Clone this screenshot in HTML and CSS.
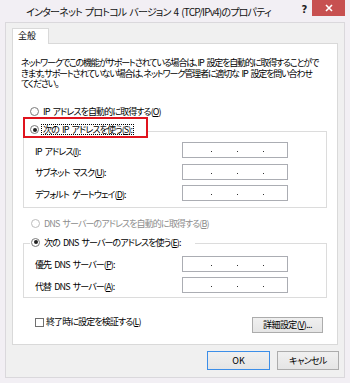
FILE: index.html
```html
<!DOCTYPE html>
<html lang="ja">
<head>
<meta charset="utf-8">
<title>インターネット プロトコル バージョン 4 (TCP/IPv4)のプロパティ</title>
<link rel="stylesheet" href="styles.css">
</head>
<body>
<div class="window">
  <div class="titlebar">
    <div class="title">インターネット プロトコル バージョン 4 (TCP/IPv4)のプロパティ</div>
    <div class="help">?</div>
    <div class="close">
      <svg width="8" height="8" viewBox="0 0 8 8"><path d="M1 1L7 7M7 1L1 7" stroke="#fff" stroke-width="1.6"/></svg>
    </div>
  </div>
  <div class="client">
    <div class="tabs"><div class="tab">全般</div></div>
    <div class="panel">
      <p class="desc">ネットワークでこの機能がサポートされている場合は、IP 設定を自動的に取得することがで<br>きます。サポートされていない場合は、ネットワーク管理者に適切な IP 設定を問い合わせ<br>てください。</p>

      <div class="radio r-ip-auto"><span class="rb"></span><span class="rt">IP アドレスを自動的に取得する(<u>O</u>)</span></div>

      <div class="ghead g1head">
        <span class="hl"><span class="rb on"></span><span class="rt focus">次の IP アドレスを使う(<u>S</u>):</span></span>
      </div>
      <div class="group g1">
        <span class="lbl">IP アドレス(<u>I</u>):</span>
        <span class="ip"><i></i><i></i><i></i></span>
        <span class="lbl">サブネット マスク(<u>U</u>):</span>
        <span class="ip"><i></i><i></i><i></i></span>
        <span class="lbl">デフォルト ゲートウェイ(<u>D</u>):</span>
        <span class="ip"><i></i><i></i><i></i></span>
      </div>

      <div class="radio r-dns-auto disabled"><span class="rb"></span><span class="rt">DNS サーバーのアドレスを自動的に取得する(<u>B</u>)</span></div>

      <div class="ghead g2head">
        <span class="hl2"><span class="rb on"></span><span class="rt">次の DNS サーバーのアドレスを使う(<u>E</u>):</span></span>
      </div>
      <div class="group g2">
        <span class="lbl">優先 DNS サーバー(<u>P</u>):</span>
        <span class="ip"><i></i><i></i><i></i></span>
        <span class="lbl">代替 DNS サーバー(<u>A</u>):</span>
        <span class="ip"><i></i><i></i><i></i></span>
      </div>

      <div class="checkrow">
        <span class="check"><span class="cb"></span><span class="rt">終了時に設定を検証する(<u>L</u>)</span></span>
        <button class="btn adv">詳細設定(<u>V</u>)...</button>
      </div>
    </div>
    <div class="footer">
      <button class="btn ok">OK</button>
      <button class="btn cancel">キャンセル</button>
    </div>
  </div>
</div>
</body>
</html>
```
FILE: styles.css
```css
* { box-sizing: border-box; }
html, body { margin: 0; padding: 0; }
body {
  width: 350px;
  height: 383px;
  overflow: hidden;
  background: #f2eff4;
  font-family: "Noto Sans CJK JP", "Noto Sans", sans-serif;
  font-feature-settings: "palt";
  font-size: 9px;
  letter-spacing: -0.9px;
  word-spacing: 2px;
  color: #000;
}
u { text-decoration: underline; text-underline-offset: 1px; }

.window { width: 350px; height: 383px; display: flex; flex-direction: column; }

.titlebar { height: 22px; display: flex; align-items: flex-start; }
.title {
  width: 297px;
  text-align: center;
  font-size: 10px;
  letter-spacing: -0.8px;
  word-spacing: 1.5px;
  line-height: 12px;
  padding-top: 6px;
  white-space: nowrap;
  color: #111;
}
.help {
  width: 15px;
  text-align: center;
  font-family: "DejaVu Sans", sans-serif;
  font-weight: bold;
  font-size: 10px;
  letter-spacing: 0;
  line-height: 10px;
  padding-top: 5px;
  color: #222;
}
.close {
  width: 33px;
  height: 16px;
  background: #c75050;
  display: flex;
  align-items: center;
  justify-content: center;
}
.close svg { display: block; }

.client {
  margin: 0 5px;
  height: 356px;
  background: #f0f0f0;
  border: 1px solid #dad8dc;
}

.tabs { display: flex; padding: 5px 6px 0; }
.tab {
  width: 37px;
  height: 16px;
  border: 1px solid #d9d9d9;
  border-bottom: 0;
  background: #fff;
  margin-bottom: -1px;
  padding-left: 5px;
  line-height: 13px;
  letter-spacing: 0;
}

.panel {
  margin: 0 6px;
  height: 302px;
  background: #fff;
  border: 1px solid #d9d9d9;
}

.desc {
  margin: 0 0 0 8px;
  padding-top: 14px;
  line-height: 10.5px;
  white-space: nowrap;
  letter-spacing: -1.15px;
}

.radio { display: flex; align-items: center; line-height: 11px; height: 11px; }
.rb {
  flex: none;
  width: 9px;
  height: 9px;
  border-radius: 50%;
  border: 1px solid #7a7a7a;
  background: #fff;
  display: flex;
  align-items: center;
  justify-content: center;
}
.rb.on::after {
  content: "";
  width: 4px;
  height: 4px;
  border-radius: 50%;
  background: #222;
}
.rt { margin-left: 4px; white-space: nowrap; }
.disabled { color: #8d8d8d; }
.disabled .rb { border-color: #bcbcbc; }

.r-ip-auto { margin-top: 16.5px; padding-left: 17px; }

.ghead { display: flex; }
.g1head { margin-left: 10px; height: 21px; margin-bottom: -7px; }
.hl {
  display: inline-flex;
  align-items: center;
  width: 125px;
  height: 21px;
  border: 2px solid #e0141e;
  background: #fff;
  padding: 4px 0 0 5px;
  line-height: 11px;
}
.focus {
  margin-left: 2px;
  border: 1px dotted #000;
  padding: 0 1px;
  line-height: 9px;
}

.group {
  margin: 0 10px;
  border: 1px solid #dcdcdc;
  display: grid;
  grid-template-columns: 147px 106px;
  align-items: center;
  padding-left: 11px;
}
.g1 { padding-top: 10px; padding-bottom: 6px; row-gap: 5.5px; }
.g2 { padding-top: 11.5px; padding-bottom: 4px; row-gap: 5.5px; }
.lbl { white-space: nowrap; line-height: 11px; padding-top: 2px; }

.ip {
  height: 16px;
  border: 1px solid #abadb3;
  background: #fff;
  display: flex;
  align-items: flex-end;
  padding: 0 0 5px 28px;
  gap: 25px;
}
.ip i { display: block; width: 1px; height: 1px; background: #333; }

.r-dns-auto { margin-top: 9.5px; padding-left: 18px; }

.g2head { margin-top: 8px; height: 11px; margin-bottom: -4.5px; margin-left: 17px; }
.hl2 {
  display: inline-flex;
  align-items: center;
  width: 165px;
  height: 11px;
  background: #fff;
  padding-left: 1px;
  line-height: 11px;
}

.checkrow {
  margin-top: 19px;
  display: flex;
  justify-content: space-between;
  align-items: flex-start;
  padding: 0 14px 0 22px;
}
.check { display: flex; align-items: center; line-height: 10px; height: 10px; }
.cb { width: 9px; height: 9px; border: 1px solid #707070; background: #fff; flex: none; }
.check .rt { margin-left: 2px; }

.btn {
  font-family: inherit;
  font-feature-settings: "palt";
  font-size: 9px;
  letter-spacing: -0.6px;
  color: #000;
  margin: 0;
  padding: 0;
  border: 1px solid #acacac;
  background: linear-gradient(#f0f0f0, #e5e5e5);
  line-height: 12px;
}
.adv { width: 71px; height: 16px; }

.footer {
  display: flex;
  justify-content: flex-end;
  gap: 7px;
  padding: 6px 5px 0 0;
}
.ok { width: 63px; height: 19px; border-color: #3c8ee8; letter-spacing: 0; }
.cancel { width: 62px; height: 19px; }
```
